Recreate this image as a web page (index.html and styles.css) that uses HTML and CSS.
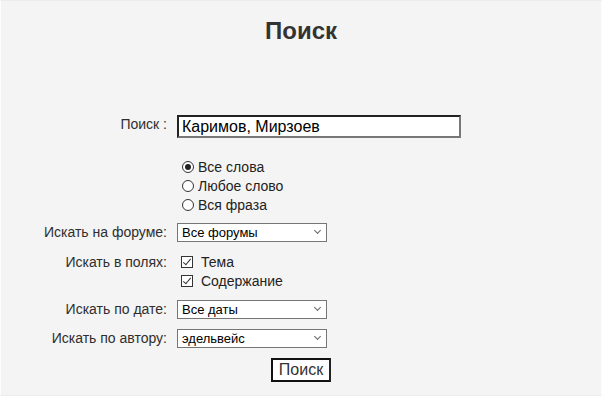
FILE: index.html
```html
<!DOCTYPE html>
<html lang="ru">
<head>
<meta charset="utf-8">
<title>Поиск</title>
<link rel="stylesheet" href="styles.css">
</head>
<body>
<div class="page">
  <h1 class="title">Поиск</h1>
  <form class="form">
    <label class="label label-search" for="q">Поиск :</label>
    <div class="ctrl ctrl-search"><input id="q" class="text" type="text" value="Каримов, Мирзоев"></div>

    <div class="label"></div>
    <div class="ctrl options">
      <label class="opt"><span class="radio checked"></span>Все слова</label>
      <label class="opt"><span class="radio"></span>Любое слово</label>
      <label class="opt"><span class="radio"></span>Вся фраза</label>
    </div>

    <div class="label label-sel">Искать на форуме:</div>
    <div class="ctrl"><div class="select">Все форумы<span class="chev"></span></div></div>

    <div class="label label-fields">Искать в полях:</div>
    <div class="ctrl options checks">
      <label class="opt"><span class="check"></span>Тема</label>
      <label class="opt"><span class="check"></span>Содержание</label>
    </div>

    <div class="label label-sel">Искать по дате:</div>
    <div class="ctrl"><div class="select">Все даты<span class="chev"></span></div></div>

    <div class="label label-sel">Искать по автору:</div>
    <div class="ctrl"><div class="select">эдельвейс<span class="chev"></span></div></div>

    <div class="label"></div>
    <div class="ctrl ctrl-btn"><button type="button" class="btn">Поиск</button></div>
  </form>
</div>
</body>
</html>
```
FILE: styles.css
```css
* { box-sizing: border-box; }
html, body { margin: 0; padding: 0; }
body {
  font-family: "Liberation Sans", Arial, sans-serif;
  color: #333;
  background: #f4f4f4;
}
.page {
  width: 602px;
  height: 396px;
  background: #f4f4f4;
  border: 1px solid #ececec;
  border-left-color: #fdfdfd;
  border-right-color: #fdfdfd;
  overflow: hidden;
}
.title {
  margin: 16px 0 0;
  font-size: 24px;
  font-weight: bold;
  text-align: center;
  color: #333;
  line-height: 28px;
}
.form {
  display: grid;
  grid-template-columns: 166px 1fr;
  column-gap: 10px;
  margin-top: 70px;
}
.label {
  text-align: right;
  font-size: 14px;
  color: #2e2e2e;
  line-height: 16px;
}
.label-search { padding-top: 1px; }
.ctrl { min-width: 0; }
.ctrl-search { padding-bottom: 19px; }
.text {
  display: block;
  width: 284px;
  height: 23px;
  margin: 0;
  padding: 0 3px;
  font-family: "Liberation Sans", Arial, sans-serif;
  font-size: 16px;
  color: #000;
  background: #fff;
  border: 2px solid;
  border-color: #222 #777 #777 #222;
  outline: none;
}
.options {
  display: flex;
  flex-direction: column;
  padding-left: 5px;
  padding-bottom: 9px;
}
.opt {
  display: flex;
  align-items: center;
  height: 19px;
  font-size: 14px;
  color: #222;
}
.radio {
  width: 12px;
  height: 12px;
  border: 1px solid #333;
  border-radius: 50%;
  margin-right: 4px;
  background: #fff;
  position: relative;
  flex: none;
}
.radio.checked::after {
  content: "";
  position: absolute;
  left: 2px;
  top: 2px;
  width: 6px;
  height: 6px;
  border-radius: 50%;
  background: #222;
}
.checks { padding-left: 4px; padding-bottom: 10px; }
.checks .opt { height: 19px; }
.check {
  width: 12px;
  height: 12px;
  border: 1px solid #333;
  margin-right: 8px;
  background: #fff;
  position: relative;
  flex: none;
}
.check::after {
  content: "";
  position: absolute;
  left: 3px;
  top: 0px;
  width: 3px;
  height: 7px;
  border: solid #333;
  border-width: 0 1px 1px 0;
  transform: rotate(40deg);
}
.label-sel { line-height: 19px; }
.label-fields { line-height: 16px; padding-top: 2px; }
.select {
  position: relative;
  width: 150px;
  height: 19px;
  border: 1px solid #767676;
  background: #fff;
  font-size: 13px;
  line-height: 17px;
  color: #000;
  padding-left: 4px;
  margin-bottom: 10px;
}
.chev {
  position: absolute;
  right: 6px;
  top: 4px;
  width: 5px;
  height: 5px;
  border: solid #666;
  border-width: 0 1px 1px 0;
  transform: rotate(45deg);
}
.ctrl-btn { padding-left: 94px; }
.btn {
  display: block;
  width: 60px;
  height: 24px;
  margin: 0;
  padding: 0;
  font-family: "Liberation Sans", Arial, sans-serif;
  font-size: 16px;
  color: #333;
  background: #fff;
  border: 2px solid #111;
  border-right-color: #222;
}
```
